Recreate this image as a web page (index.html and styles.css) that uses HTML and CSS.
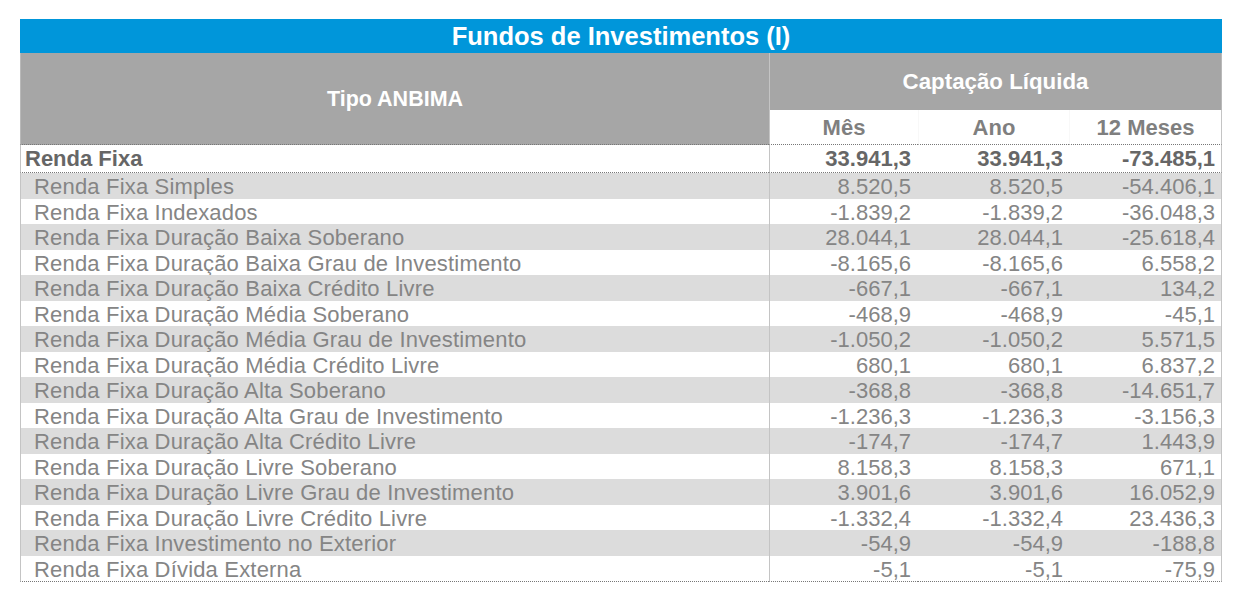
FILE: index.html
```html
<!DOCTYPE html>
<html lang="pt-BR">
<head>
<meta charset="utf-8">
<title>Fundos de Investimentos (I)</title>
<link rel="stylesheet" href="styles.css">
</head>
<body>
<div class="page">
  <table class="fundos">
    <colgroup>
      <col class="c-tipo">
      <col class="c-mes">
      <col class="c-ano">
      <col class="c-12m">
    </colgroup>
    <thead>
      <tr class="title-row">
        <th colspan="4" class="title">Fundos de Investimentos (I)</th>
      </tr>
      <tr class="head-row">
        <th rowspan="2" class="tipo">Tipo ANBIMA</th>
        <th colspan="3" class="captacao">Captação Líquida</th>
      </tr>
      <tr class="sub-row">
        <th class="sub first">Mês</th>
        <th class="sub">Ano</th>
        <th class="sub">12 Meses</th>
      </tr>
    </thead>
    <tbody>
      <tr class="total">
        <td class="label">Renda Fixa</td>
        <td class="num first">33.941,3</td>
        <td class="num">33.941,3</td>
        <td class="num">-73.485,1</td>
      </tr>
      <tr class="item shade"><td class="label">Renda Fixa Simples</td><td class="num first">8.520,5</td><td class="num">8.520,5</td><td class="num">-54.406,1</td></tr>
      <tr class="item"><td class="label">Renda Fixa Indexados</td><td class="num first">-1.839,2</td><td class="num">-1.839,2</td><td class="num">-36.048,3</td></tr>
      <tr class="item shade"><td class="label">Renda Fixa Duração Baixa Soberano</td><td class="num first">28.044,1</td><td class="num">28.044,1</td><td class="num">-25.618,4</td></tr>
      <tr class="item"><td class="label">Renda Fixa Duração Baixa Grau de Investimento</td><td class="num first">-8.165,6</td><td class="num">-8.165,6</td><td class="num">6.558,2</td></tr>
      <tr class="item shade"><td class="label">Renda Fixa Duração Baixa Crédito Livre</td><td class="num first">-667,1</td><td class="num">-667,1</td><td class="num">134,2</td></tr>
      <tr class="item"><td class="label">Renda Fixa Duração Média Soberano</td><td class="num first">-468,9</td><td class="num">-468,9</td><td class="num">-45,1</td></tr>
      <tr class="item shade"><td class="label">Renda Fixa Duração Média Grau de Investimento</td><td class="num first">-1.050,2</td><td class="num">-1.050,2</td><td class="num">5.571,5</td></tr>
      <tr class="item"><td class="label">Renda Fixa Duração Média Crédito Livre</td><td class="num first">680,1</td><td class="num">680,1</td><td class="num">6.837,2</td></tr>
      <tr class="item shade"><td class="label">Renda Fixa Duração Alta Soberano</td><td class="num first">-368,8</td><td class="num">-368,8</td><td class="num">-14.651,7</td></tr>
      <tr class="item"><td class="label">Renda Fixa Duração Alta Grau de Investimento</td><td class="num first">-1.236,3</td><td class="num">-1.236,3</td><td class="num">-3.156,3</td></tr>
      <tr class="item shade"><td class="label">Renda Fixa Duração Alta Crédito Livre</td><td class="num first">-174,7</td><td class="num">-174,7</td><td class="num">1.443,9</td></tr>
      <tr class="item"><td class="label">Renda Fixa Duração Livre Soberano</td><td class="num first">8.158,3</td><td class="num">8.158,3</td><td class="num">671,1</td></tr>
      <tr class="item shade"><td class="label">Renda Fixa Duração Livre Grau de Investimento</td><td class="num first">3.901,6</td><td class="num">3.901,6</td><td class="num">16.052,9</td></tr>
      <tr class="item"><td class="label">Renda Fixa Duração Livre Crédito Livre</td><td class="num first">-1.332,4</td><td class="num">-1.332,4</td><td class="num">23.436,3</td></tr>
      <tr class="item shade"><td class="label">Renda Fixa Investimento no Exterior</td><td class="num first">-54,9</td><td class="num">-54,9</td><td class="num">-188,8</td></tr>
      <tr class="item last"><td class="label">Renda Fixa Dívida Externa</td><td class="num first">-5,1</td><td class="num">-5,1</td><td class="num">-75,9</td></tr>
    </tbody>
  </table>
</div>
</body>
</html>
```

FILE: styles.css
```css
html, body {
  margin: 0;
  padding: 0;
  background: #ffffff;
}

.page {
  padding: 19px 0 0 20px;
}

.fundos {
  width: 1202px;
  table-layout: fixed;
  border-collapse: separate;
  border-spacing: 0;
  font-family: "Liberation Sans", Arial, sans-serif;
}

.c-tipo { width: 749px; }
.c-mes { width: 149px; }
.c-ano { width: 151px; }
.c-12m { width: 153px; }

.fundos th,
.fundos td {
  padding: 0;
  white-space: nowrap;
  overflow: hidden;
}

/* title bar */
.title {
  height: 33px;
  padding-top: 1px !important;
  background: #0096da;
  color: #ffffff;
  font-size: 25.5px;
  font-weight: bold;
  text-align: center;
  vertical-align: middle;
  line-height: 33px;
}

/* grey header */
.tipo {
  background: #a6a6a6;
  color: #ffffff;
  font-size: 21.5px;
  font-weight: bold;
  text-align: center;
  vertical-align: middle;
  border-left: 1px solid #b9b9b9;
  border-bottom: 1px dotted #777777;
  padding-top: 2px !important;
}

.captacao {
  height: 57px;
  background: #a6a6a6;
  color: #ffffff;
  font-size: 22.3px;
  font-weight: bold;
  text-align: center;
  vertical-align: middle;
  border-left: 1px solid #c4c4c4;
  border-right: 1px solid #b9b9b9;
}

.sub {
  height: 32px;
  padding-top: 2px !important;
  background: #ffffff;
  color: #7f7f7f;
  font-size: 22px;
  font-weight: bold;
  text-align: center;
  vertical-align: middle;
  border-left: 1px solid #f8f8f8;
  border-bottom: 1px dotted #777777;
}

.sub.first {
  border-left: 1px solid #c4c4c4;
}

.sub-row .sub:last-child {
  border-right: 1px solid #c4c4c4;
}

/* body rows */
.label {
  border-left: 1px solid #c4c4c4;
  text-align: left;
}

.num {
  text-align: right;
  padding-right: 6px !important;
}

.num.first {
  border-left: 1px solid #c4c4c4;
  padding-right: 7px !important;
}

tbody tr td:last-child {
  border-right: 1px solid #c4c4c4;
}

.total td {
  height: 26px;
  padding-top: 1px !important;
  font-size: 22px;
  font-weight: bold;
  color: #666666;
  background: #ffffff;
  border-bottom: 1px dotted #777777;
  vertical-align: middle;
  line-height: 26px;
}

.total .label {
  padding-left: 4px;
}

.item td {
  height: 23.5px;
  padding-top: 2px !important;
  font-size: 22px;
  color: #858585;
  background: #ffffff;
  vertical-align: middle;
  line-height: 23px;
}

.item .label {
  padding-left: 13px;
  letter-spacing: 0.18px;
}

.item.shade td {
  background: #dcdcdc;
}

.item.last td {
  border-bottom: 1px dotted #777777;
}
```
